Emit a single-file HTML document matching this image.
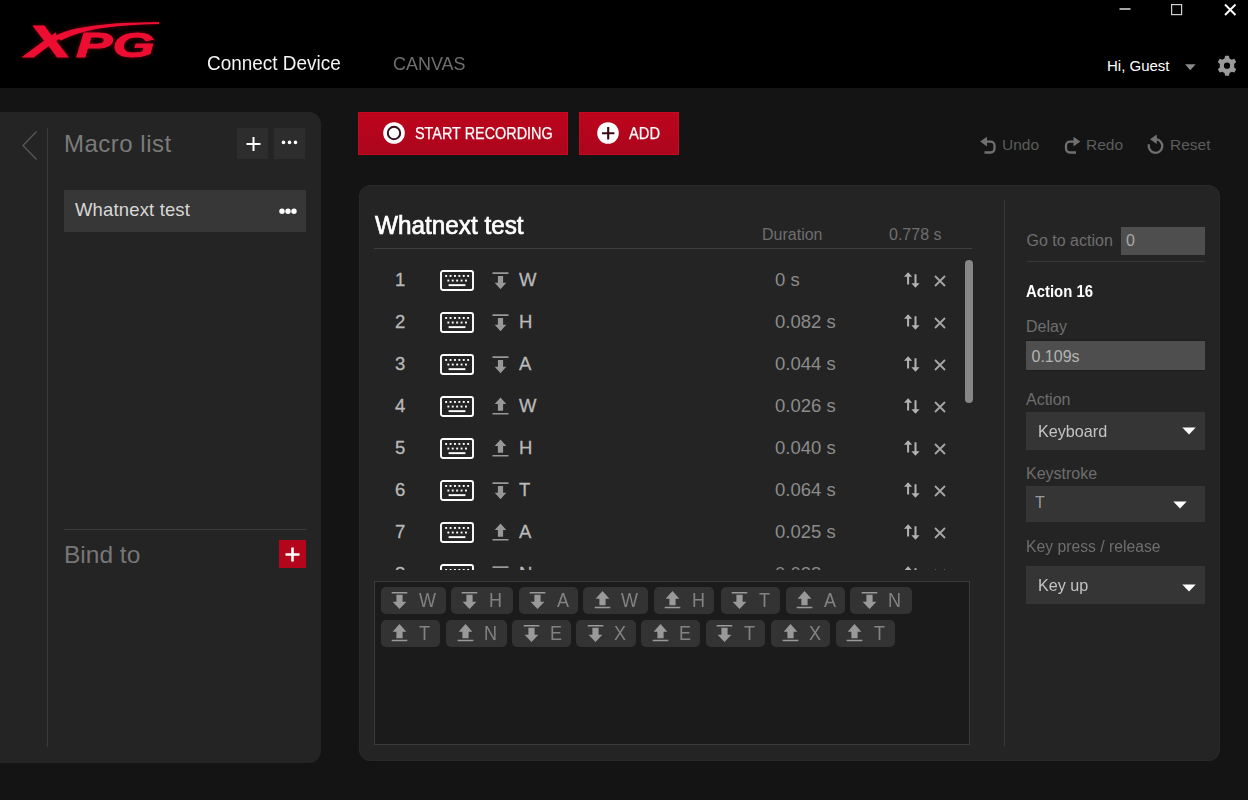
<!DOCTYPE html>
<html lang="en">
<head>
<meta charset="utf-8">
<title>XPG Prime - Macro</title>
<style>
*{box-sizing:border-box;margin:0;padding:0}
html,body{width:1248px;height:800px;overflow:hidden;background:#141414;font-family:"Liberation Sans",sans-serif;color:#aaa}
.abs{position:absolute}
#app{position:relative;width:1248px;height:800px;overflow:hidden;background:#141414}
#top{left:0;top:0;width:1248px;height:88px;background:#000}
.t{position:absolute;white-space:nowrap;line-height:1}
#side{left:0;top:112px;width:321px;height:651px;background:#242424;border-radius:0 12px 12px 0}
#main{left:359px;top:185px;width:861px;height:576px;background:#242424;border-radius:12px;box-shadow:inset 0 0 0 1px #292929}
.btn{position:absolute;background:linear-gradient(#bd041c,#ab061d);border:1px solid #c30a21}
.sq{position:absolute;background:#2d2d2d}
.hl{position:absolute;height:1px;background:#444}
.vl{position:absolute;width:1px;background:#444}
.sx{transform-origin:0 50%}
.chip{position:absolute;height:27px;background:#333;border-radius:5px}
.chip svg{position:absolute;left:10.800px;top:5px}
.chip svg.u{top:4px}
.chip span{position:absolute;left:38px;top:2.500px;font-size:20px;line-height:1;color:#828282;transform:scaleX(.9);transform-origin:0 50%}
.rb{font-size:18.5px;color:#b9b9b9;-webkit-text-stroke:.3px #b9b9b9}
/*SECTION-CSS*/
</style>
</head>
<body>
<div id="app">
<!-- TOP BAR -->
<div id="top" class="abs">
<svg class="abs" style="left:14px;top:14px" width="156" height="52" viewBox="14 14 156 52">
<defs><clipPath id="xc"><path d="M0 0 H50 L57 38 L90 60 V70 H0 Z"/></clipPath>
<filter id="glow" x="-10%" y="-30%" width="120%" height="160%"><feGaussianBlur in="SourceGraphic" stdDeviation="2.2" result="b"/><feComponentTransfer in="b" result="g"><feFuncA type="linear" slope="0.42"/></feComponentTransfer><feMerge><feMergeNode in="g"/><feMergeNode in="SourceGraphic"/></feMerge></filter></defs>
<g filter="url(#glow)" fill="#ee1030" stroke="#ee1030" stroke-width="0.9" stroke-linejoin="miter" font-family="Liberation Sans, sans-serif" font-weight="bold" font-style="italic">
<g clip-path="url(#xc)"><text transform="translate(26,57) scale(1.58,1)" font-size="44">X</text></g>
<text transform="translate(76,57) scale(1.56,1)" font-size="35">PG</text>
<path stroke="none" d="M54 36.5 C72 26.5 105 22.6 159 22 L159 24 C112 25 84 29 61 40.5 Z"/>
</g>
</svg>
<div class="t sx" style="left:206.500px;top:53px;font-size:20px;color:#f4f4f4;transform:scaleX(.947)">Connect Device</div>
<div class="t sx" style="left:392.500px;top:53.500px;font-size:19px;color:#6f6f6f;transform:scaleX(.945)">CANVAS</div>
<div class="t" style="left:1107px;top:58px;font-size:15px;color:#fff">Hi, Guest</div>
<svg class="abs" style="left:1110px;top:0" width="138" height="88" viewBox="1110 0 138 88">
<rect x="1119.5" y="8.2" width="11" height="1.6" fill="#cfcfcf"/>
<rect x="1171.6" y="4.6" width="10" height="10" fill="none" stroke="#cfcfcf" stroke-width="1.2"/>
<path d="M1225 4.5 L1235.5 15 M1235.5 4.5 L1225 15" stroke="#fff" stroke-width="1.9" fill="none"/>
<path d="M1185 64.2 H1195.6 L1190.3 70.2 Z" fill="#8a8a8a"/>
<g transform="translate(1227,65.7)" fill="#9a9a9a">
<path id="gear" fill-rule="evenodd" d="M-1.9 -10 H1.9 L2.5 -7.2 A7.6 7.6 0 0 1 4.6 -6 L7.3 -6.9 L9.2 -3.6 L7.1 -1.7 A7.6 7.6 0 0 1 7.1 1.7 L9.2 3.6 L7.3 6.9 L4.6 6 A7.6 7.6 0 0 1 2.5 7.2 L1.9 10 H-1.9 L-2.5 7.2 A7.6 7.6 0 0 1 -4.6 6 L-7.3 6.9 L-9.2 3.6 L-7.1 1.7 A7.6 7.6 0 0 1 -7.1 -1.7 L-9.2 -3.6 L-7.3 -6.9 L-4.6 -6 A7.6 7.6 0 0 1 -2.5 -7.2 Z M0 -3.1 A3.1 3.1 0 1 0 0 3.1 A3.1 3.1 0 1 0 0 -3.1 Z"/>
</g>
</svg>
</div>

<!-- SIDEBAR -->
<div id="side" class="abs">
<svg class="abs" style="left:18px;top:14px" width="24" height="40" viewBox="18 126 24 40"><path d="M36.5 131.5 L23 145.5 L36.5 159.5" fill="none" stroke="#565656" stroke-width="1.4"/></svg>
<div class="vl" style="left:47px;top:16px;height:619px;background:#3a3a3a"></div>
<div class="t" style="left:64px;top:20px;font-size:24px;letter-spacing:.5px;color:#7b7b7b">Macro list</div>
<div class="sq" style="left:237px;top:16px;width:31px;height:31px"></div>
<div class="sq" style="left:274px;top:16px;width:31px;height:31px"></div>
<svg class="abs" style="left:237px;top:16px" width="68" height="31" viewBox="237 128 68 31">
<path d="M246.5 144 H260.5 M253.5 137 V151" stroke="#fff" stroke-width="2" fill="none"/>
<circle cx="283.5" cy="142.4" r="1.8" fill="#fff"/><circle cx="289.5" cy="142.4" r="1.8" fill="#fff"/><circle cx="295.5" cy="142.4" r="1.8" fill="#fff"/>
</svg>
<div class="abs" style="left:64px;top:78px;width:242px;height:42px;background:#373737"></div>
<div class="t" style="left:75px;top:89px;font-size:18.5px;letter-spacing:.15px;color:#d8d8d8">Whatnext test</div>
<svg class="abs" style="left:276px;top:92px" width="24" height="14" viewBox="276 204 24 14"><circle cx="282" cy="211.3" r="2.7" fill="#fff"/><circle cx="288" cy="211.3" r="2.7" fill="#fff"/><circle cx="294" cy="211.3" r="2.7" fill="#fff"/></svg>
<div class="hl" style="left:64px;top:417px;width:242px;background:#3d3d3d"></div>
<div class="t" style="left:64px;top:431px;font-size:24.5px;color:#777">Bind to</div>
<div class="abs" style="left:279px;top:428px;width:27px;height:28px;background:#b4051d"></div>
<svg class="abs" style="left:279px;top:429px" width="27" height="27" viewBox="0 0 27 27"><path d="M6.5 13.5 H20.5 M13.5 6.5 V20.5" stroke="#fff" stroke-width="2.6" fill="none"/></svg>
</div>

<!-- TOOLBAR -->
<div class="btn" style="left:358px;top:112px;width:210px;height:43px"></div>
<div class="btn" style="left:579px;top:112px;width:100px;height:43px"></div>
<svg class="abs" style="left:380px;top:120px" width="250" height="26" viewBox="380 120 250 26">
<circle cx="394" cy="133" r="10.8" fill="#fff"/><circle cx="394" cy="133" r="6.2" fill="none" stroke="#33101a" stroke-width="2"/>
<circle cx="608" cy="133" r="10.8" fill="#fff"/><path d="M602 133.200 H614.400 M608.200 127 V139.400" stroke="#3a0a12" stroke-width="2.1" fill="none"/>
</svg>
<div class="t sx" style="left:415px;top:125px;font-size:16.500px;color:#fff;-webkit-text-stroke:.25px #fff;transform:scaleX(.873)">START RECORDING</div>
<div class="t sx" style="left:628.500px;top:125px;font-size:16.500px;color:#fff;-webkit-text-stroke:.25px #fff;transform:scaleX(.89)">ADD</div>
<svg class="abs" style="left:976px;top:130px" width="194" height="28" viewBox="976 130 194 28" fill="none" stroke="#707070" stroke-width="2.3">
<path d="M986 141.6 H990.6 A3.9 3.9 0 0 1 994.5 145.500 V148.6 A3.9 3.9 0 0 1 990.6 152.500 H984.500"/>
<path d="M980.2 141.6 L987 136.800 V146.400 Z" fill="#707070" stroke="none"/>
<path d="M1074.500 141.6 H1069.900 A3.9 3.9 0 0 0 1066 145.500 V148.6 A3.9 3.9 0 0 0 1069.900 152.500 H1076"/>
<path d="M1080.300 141.6 L1073.500 136.800 V146.400 Z" fill="#707070" stroke="none"/>
<path d="M1155.500 139.200 A6.800 6.800 0 1 1 1148.900 144.300"/>
<path d="M1150 139.200 L1156.800 134.400 V144 Z" fill="#707070" stroke="none"/>
</svg>
<div class="t" style="left:1002px;top:137px;font-size:15.5px;color:#5c5c5c">Undo</div>
<div class="t" style="left:1086px;top:137px;font-size:15.5px;color:#5c5c5c">Redo</div>
<div class="t" style="left:1170px;top:137px;font-size:15.5px;color:#5c5c5c">Reset</div>

<!-- MAIN -->
<div id="main" class="abs">
</div>
<div id="mc" class="abs" style="left:0;top:0;width:1248px;height:800px">
<svg width="0" height="0" style="position:absolute"><defs>
<symbol id="kb" viewBox="0 0 34 22"><rect x="1" y="1" width="32" height="19" rx="2" fill="none" stroke="#fff" stroke-width="1.9"/>
<g fill="#fff"><rect x="5.2" y="5" width="1.9" height="1.9"/><rect x="9.6" y="5" width="1.9" height="1.9"/><rect x="14" y="5" width="1.9" height="1.9"/><rect x="18.400" y="5" width="1.9" height="1.9"/><rect x="22.800" y="5" width="1.9" height="1.9"/><rect x="27.200" y="5" width="1.9" height="1.9"/>
<rect x="7.4" y="9.600" width="1.9" height="1.9"/><rect x="11.800" y="9.600" width="1.9" height="1.9"/><rect x="16.200" y="9.600" width="1.9" height="1.9"/><rect x="20.600" y="9.600" width="1.9" height="1.9"/><rect x="25" y="9.600" width="1.9" height="1.9"/>
<rect x="8.6" y="14.200" width="16.800" height="1.9"/></g></symbol>
<symbol id="kd" viewBox="0 0 17 18"><path d="M0.5 0.3 H16.500 V1.900 H0.500 Z M5.900 4 H11.100 V10.800 H14.300 L8.500 17.200 L2.700 10.800 H5.900 Z"/></symbol>
<symbol id="ku" viewBox="0 0 17 18"><path d="M0.500 17.500 H16.500 V15.900 H0.500 Z M5.900 13.800 H11.100 V7 H14.300 L8.500 0.600 L2.700 7 H5.900 Z"/></symbol>
<symbol id="cd" viewBox="0 0 17 18"><path d="M0.700 0 H16.300 V1.600 H0.700 Z M5.400 2.700 H11.600 V9.800 H15.400 L8.500 17 L1.600 9.800 H5.400 Z"/></symbol>
<symbol id="cu" viewBox="0 0 17 18"><path d="M0.700 17.300 H16.300 V15.700 H0.700 Z M5.400 14.300 H11.600 V7.700 H15.400 L8.500 0 L1.600 7.700 H5.400 Z"/></symbol>
<symbol id="sw" viewBox="0 0 16 16"><path fill="#b2b2b2" d="M0 4.8 L4.1 0.2 L8.2 4.8 H5.1 V12.400 H3.1 V4.800 Z M10.500 2.200 H12.500 V11.200 H15.600 L11.500 15.800 L7.400 11.200 H10.500 Z"/></symbol>
<symbol id="xx" viewBox="0 0 12 12"><path d="M1 1 L11 11 M11 1 L1 11" fill="none" stroke="#a6a6a6" stroke-width="1.8"/></symbol>
<symbol id="dd" viewBox="0 0 14 8"><path d="M0.300 0.500 H13.700 L7 7.500 Z" fill="#fff"/></symbol>
</defs></svg>
<div class="t sx" style="left:374.500px;top:212.500px;font-size:25px;color:#fff;-webkit-text-stroke:.7px #fff;transform:scaleX(.972)">Whatnext test</div>
<div class="t" style="left:762px;top:226.500px;font-size:16px;color:#6e6e6e">Duration</div>
<div class="t" style="left:889px;top:226.500px;font-size:16px;color:#6e6e6e">0.778 s</div>
<div class="hl" style="left:374px;top:248px;width:598px;background:#3e3e3e"></div>
<div class="abs" style="left:374px;top:250px;width:600px;height:320px;overflow:hidden">
<div class="t rb" style="left:21px;top:21px">1</div><svg class="abs" style="left:66px;top:19.5px" width="34" height="22"><use href="#kb"/></svg><svg class="abs" style="left:118px;top:21.5px" width="17" height="18" fill="#989898"><use href="#kd"/></svg><div class="t rb" style="left:145px;top:21px">W</div><div class="t" style="left:401px;top:21px;font-size:18.5px;color:#8c8c8c">0 s</div><svg class="abs" style="left:530px;top:22px" width="16" height="16"><use href="#sw"/></svg><svg class="abs" style="left:560px;top:24.5px" width="12" height="12"><use href="#xx"/></svg>
<div class="t rb" style="left:21px;top:63px">2</div><svg class="abs" style="left:66px;top:61.5px" width="34" height="22"><use href="#kb"/></svg><svg class="abs" style="left:118px;top:63.5px" width="17" height="18" fill="#989898"><use href="#kd"/></svg><div class="t rb" style="left:145px;top:63px">H</div><div class="t" style="left:401px;top:63px;font-size:18.5px;color:#8c8c8c">0.082 s</div><svg class="abs" style="left:530px;top:64px" width="16" height="16"><use href="#sw"/></svg><svg class="abs" style="left:560px;top:66.5px" width="12" height="12"><use href="#xx"/></svg>
<div class="t rb" style="left:21px;top:105px">3</div><svg class="abs" style="left:66px;top:103.5px" width="34" height="22"><use href="#kb"/></svg><svg class="abs" style="left:118px;top:105.5px" width="17" height="18" fill="#989898"><use href="#kd"/></svg><div class="t rb" style="left:145px;top:105px">A</div><div class="t" style="left:401px;top:105px;font-size:18.5px;color:#8c8c8c">0.044 s</div><svg class="abs" style="left:530px;top:106px" width="16" height="16"><use href="#sw"/></svg><svg class="abs" style="left:560px;top:108.5px" width="12" height="12"><use href="#xx"/></svg>
<div class="t rb" style="left:21px;top:147px">4</div><svg class="abs" style="left:66px;top:145.5px" width="34" height="22"><use href="#kb"/></svg><svg class="abs" style="left:118px;top:146.5px" width="17" height="18" fill="#989898"><use href="#ku"/></svg><div class="t rb" style="left:145px;top:147px">W</div><div class="t" style="left:401px;top:147px;font-size:18.5px;color:#8c8c8c">0.026 s</div><svg class="abs" style="left:530px;top:148px" width="16" height="16"><use href="#sw"/></svg><svg class="abs" style="left:560px;top:150.5px" width="12" height="12"><use href="#xx"/></svg>
<div class="t rb" style="left:21px;top:189px">5</div><svg class="abs" style="left:66px;top:187.5px" width="34" height="22"><use href="#kb"/></svg><svg class="abs" style="left:118px;top:188.5px" width="17" height="18" fill="#989898"><use href="#ku"/></svg><div class="t rb" style="left:145px;top:189px">H</div><div class="t" style="left:401px;top:189px;font-size:18.5px;color:#8c8c8c">0.040 s</div><svg class="abs" style="left:530px;top:190px" width="16" height="16"><use href="#sw"/></svg><svg class="abs" style="left:560px;top:192.5px" width="12" height="12"><use href="#xx"/></svg>
<div class="t rb" style="left:21px;top:231px">6</div><svg class="abs" style="left:66px;top:229.5px" width="34" height="22"><use href="#kb"/></svg><svg class="abs" style="left:118px;top:231.5px" width="17" height="18" fill="#989898"><use href="#kd"/></svg><div class="t rb" style="left:145px;top:231px">T</div><div class="t" style="left:401px;top:231px;font-size:18.5px;color:#8c8c8c">0.064 s</div><svg class="abs" style="left:530px;top:232px" width="16" height="16"><use href="#sw"/></svg><svg class="abs" style="left:560px;top:234.5px" width="12" height="12"><use href="#xx"/></svg>
<div class="t rb" style="left:21px;top:273px">7</div><svg class="abs" style="left:66px;top:271.5px" width="34" height="22"><use href="#kb"/></svg><svg class="abs" style="left:118px;top:272.5px" width="17" height="18" fill="#989898"><use href="#ku"/></svg><div class="t rb" style="left:145px;top:273px">A</div><div class="t" style="left:401px;top:273px;font-size:18.5px;color:#8c8c8c">0.025 s</div><svg class="abs" style="left:530px;top:274px" width="16" height="16"><use href="#sw"/></svg><svg class="abs" style="left:560px;top:276.5px" width="12" height="12"><use href="#xx"/></svg>
<div class="t rb" style="left:21px;top:315px">8</div><svg class="abs" style="left:66px;top:313.5px" width="34" height="22"><use href="#kb"/></svg><svg class="abs" style="left:118px;top:315.5px" width="17" height="18" fill="#989898"><use href="#kd"/></svg><div class="t rb" style="left:145px;top:315px">N</div><div class="t" style="left:401px;top:315px;font-size:18.5px;color:#8c8c8c">0.038 s</div><svg class="abs" style="left:530px;top:316px" width="16" height="16"><use href="#sw"/></svg><svg class="abs" style="left:560px;top:318.5px" width="12" height="12"><use href="#xx"/></svg>
</div>
<div class="abs" style="left:965px;top:260px;width:8px;height:143px;border-radius:4px;background:#868686"></div>
<div class="vl" style="left:1004px;top:200px;height:546px;background:#3a3a3a"></div>
<div class="abs" style="left:374px;top:581px;width:596px;height:164px;background:#1b1b1b;border:1px solid #3a3a3a"></div>
<div class="chip" style="left:380.5px;top:587px;width:65.0px"><svg width="17" height="18" fill="#999"><use href="#cd"/></svg><span>W</span></div>
<div class="chip" style="left:450.5px;top:587px;width:62.0px"><svg width="17" height="18" fill="#999"><use href="#cd"/></svg><span>H</span></div>
<div class="chip" style="left:518.5px;top:587px;width:59.5px"><svg width="17" height="18" fill="#999"><use href="#cd"/></svg><span>A</span></div>
<div class="chip" style="left:583.0px;top:587px;width:65.0px"><svg class="u" width="17" height="18" fill="#999"><use href="#cu"/></svg><span>W</span></div>
<div class="chip" style="left:653.5px;top:587px;width:60.5px"><svg class="u" width="17" height="18" fill="#999"><use href="#cu"/></svg><span>H</span></div>
<div class="chip" style="left:720.5px;top:587px;width:59.0px"><svg width="17" height="18" fill="#999"><use href="#cd"/></svg><span>T</span></div>
<div class="chip" style="left:785.5px;top:587px;width:59.0px"><svg class="u" width="17" height="18" fill="#999"><use href="#cu"/></svg><span>A</span></div>
<div class="chip" style="left:850.0px;top:587px;width:61.5px"><svg width="17" height="18" fill="#999"><use href="#cd"/></svg><span>N</span></div>
<div class="chip" style="left:380.5px;top:620px;width:59.5px"><svg class="u" width="17" height="18" fill="#999"><use href="#cu"/></svg><span>T</span></div>
<div class="chip" style="left:446.0px;top:620px;width:60.5px"><svg class="u" width="17" height="18" fill="#999"><use href="#cu"/></svg><span>N</span></div>
<div class="chip" style="left:512.0px;top:620px;width:58.5px"><svg width="17" height="18" fill="#999"><use href="#cd"/></svg><span>E</span></div>
<div class="chip" style="left:576.0px;top:620px;width:59.5px"><svg width="17" height="18" fill="#999"><use href="#cd"/></svg><span>X</span></div>
<div class="chip" style="left:641.0px;top:620px;width:58.5px"><svg class="u" width="17" height="18" fill="#999"><use href="#cu"/></svg><span>E</span></div>
<div class="chip" style="left:705.5px;top:620px;width:59.0px"><svg width="17" height="18" fill="#999"><use href="#cd"/></svg><span>T</span></div>
<div class="chip" style="left:771.0px;top:620px;width:59.0px"><svg class="u" width="17" height="18" fill="#999"><use href="#cu"/></svg><span>X</span></div>
<div class="chip" style="left:835.5px;top:620px;width:59.5px"><svg class="u" width="17" height="18" fill="#999"><use href="#cu"/></svg><span>T</span></div>
<div class="t" style="left:1026.500px;top:232.800px;font-size:16px;color:#6e6e6e">Go to action</div>
<div class="abs" style="left:1121px;top:227px;width:84px;height:28px;background:#4e4e4e"></div>
<div class="t" style="left:1126px;top:233px;font-size:16px;color:#a8a8a8">0</div>
<div class="hl" style="left:1027px;top:261px;width:178px;background:#373737"></div>
<div class="t sx" style="left:1026px;top:284px;font-size:16px;font-weight:bold;color:#fff;transform:scaleX(.93)">Action 16</div>
<div class="t" style="left:1026px;top:319px;font-size:16px;color:#6e6e6e">Delay</div>
<div class="abs" style="left:1026px;top:340px;width:179px;height:31px;background:#4e4e4e;border-top:1px solid #1d1d1d;border-bottom:1px solid #1d1d1d"></div>
<div class="t" style="left:1031.500px;top:348.500px;font-size:16px;color:#b4b4b4">0.109s</div>
<div class="t" style="left:1026px;top:392px;font-size:16px;color:#6e6e6e">Action</div>
<div class="abs" style="left:1026px;top:412px;width:179px;height:38px;background:#353535"></div>
<div class="t sx" style="left:1038px;top:423px;font-size:17px;color:#c4c4c4;transform:scaleX(.95)">Keyboard</div>
<svg class="abs" style="left:1181.500px;top:427px" width="14" height="8"><use href="#dd"/></svg>
<div class="t" style="left:1026px;top:466px;font-size:16px;color:#6e6e6e">Keystroke</div>
<div class="abs" style="left:1026px;top:486px;width:179px;height:36px;background:#353535"></div>
<div class="t" style="left:1035px;top:495px;font-size:16px;color:#9a9a9a">T</div>
<svg class="abs" style="left:1173px;top:501px" width="14" height="8"><use href="#dd"/></svg>
<div class="t sx" style="left:1026px;top:539px;font-size:16px;color:#6e6e6e;transform:scaleX(.982)">Key press / release</div>
<div class="abs" style="left:1026px;top:566px;width:179px;height:38px;background:#353535"></div>
<div class="t sx" style="left:1038px;top:577px;font-size:17px;color:#c4c4c4;transform:scaleX(.95)">Key up</div>
<svg class="abs" style="left:1181.500px;top:584px" width="14" height="8"><use href="#dd"/></svg>
</div>
</div>
</body>
</html>
